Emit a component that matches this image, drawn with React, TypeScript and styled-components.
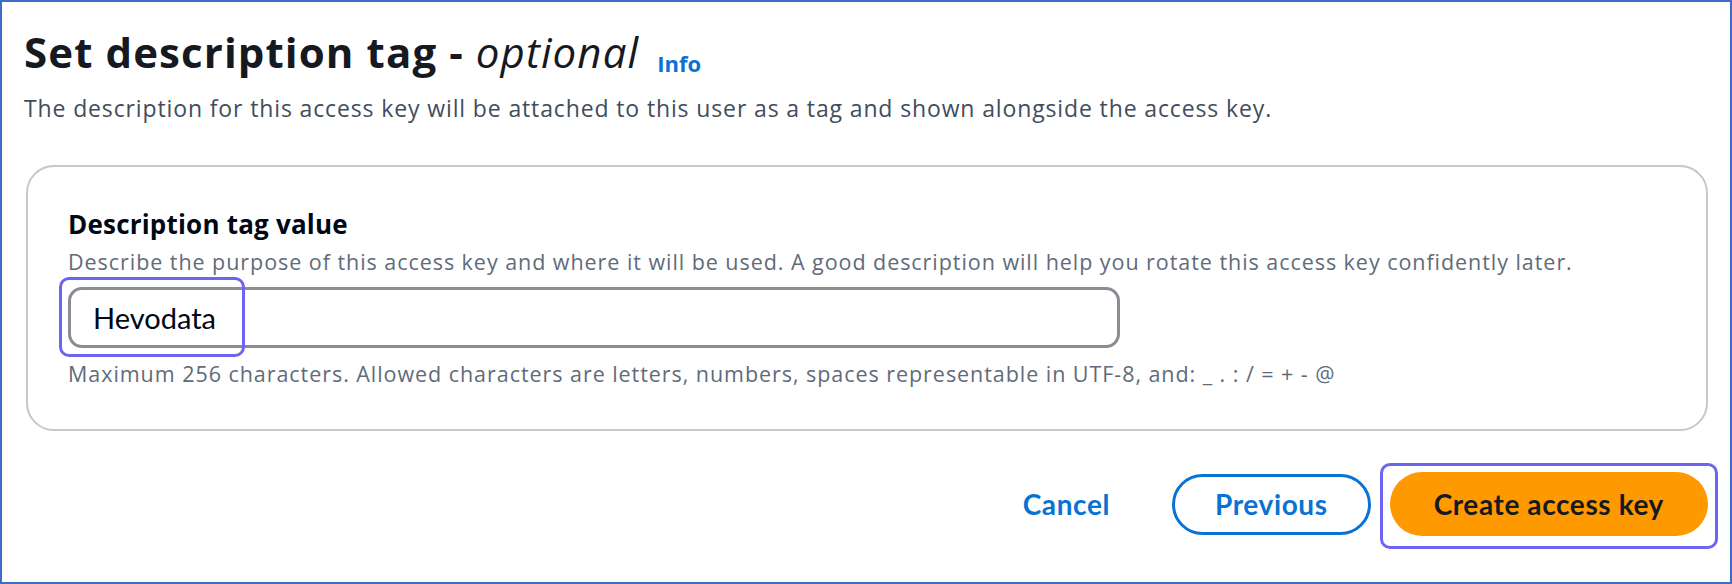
import React from "react";
import styled, { createGlobalStyle } from "styled-components";

const GlobalStyle = createGlobalStyle`
  html, body {
    margin: 0;
    padding: 0;
    background: #ffffff;
  }
  body {
    font-family: "Open Sans", Lato, sans-serif;
    -webkit-font-smoothing: antialiased;
  }
  * { box-sizing: border-box; }
`;

const Frame = styled.div`
  width: 1732px;
  height: 584px;
  border: 2px solid #3a6cc8;
  padding: 26px 22px 0 22px;
  display: flex;
  flex-direction: column;
  background: #ffffff;
`;

const Header = styled.header`
  display: flex;
  flex-direction: column;
`;

const TitleRow = styled.div`
  display: flex;
  align-items: baseline;
  gap: 18px;
`;

const Title = styled.h1`
  margin: 0;
  font-size: 42px;
  line-height: 48px;
  font-weight: 700;
  color: #16191f;
  letter-spacing: 1.1px;
`;

const Optional = styled.i`
  font-weight: 400;
  font-style: italic;
`;

const InfoLink = styled.a`
  font-size: 22px;
  font-weight: 700;
  color: #0972d3;
  text-decoration: none;
  position: relative;
  top: 4px;
`;

const HeaderDescription = styled.p`
  margin: 20px 0 0 0;
  font-size: 23px;
  line-height: 25px;
  letter-spacing: 0.87px;
  color: #414d5c;
`;

const Card = styled.section`
  margin-top: 44px;
  margin-left: 2px;
  border: 2px solid #c6c6cd;
  border-radius: 28px;
  padding: 43px 40px 43px 40px;
  display: flex;
  flex-direction: column;
`;

const Label = styled.label`
  font-size: 26px;
  line-height: 29px;
  font-weight: 700;
  letter-spacing: 0.2px;
  color: #000716;
`;

const Constraint = styled.div<{ $top: number }>`
  margin-top: ${(p) => p.$top}px;
  font-size: 21.5px;
  letter-spacing: 0.95px;
  line-height: 25px;
  color: #5f6b7a;
`;

const InputWrap = styled.div`
  position: relative;
  margin-top: 13px;
  width: 1052px;
`;

const TextInput = styled.div`
  height: 61px;
  border: 3px solid #8c8c94;
  border-radius: 14px;
  padding: 0 0 0 22px;
  display: flex;
  align-items: center;
  font-family: Lato, "Open Sans", sans-serif;
  font-size: 29px;
  color: #000716;
  background: #ffffff;
`;

const Highlight = styled.span<{ $l: number; $t: number; $w: number; $h: number }>`
  position: absolute;
  left: ${(p) => p.$l}px;
  top: ${(p) => p.$t}px;
  width: ${(p) => p.$w}px;
  height: ${(p) => p.$h}px;
  border: 3px solid #6e64f2;
  border-radius: 10px;
  pointer-events: none;
`;

const Actions = styled.div`
  margin-top: 41px;
  display: flex;
  justify-content: flex-end;
  align-items: center;
  gap: 19px;
`;

type Variant = "link" | "normal" | "primary";

const Button = styled.button<{ $variant: Variant }>`
  font-family: Lato, "Open Sans", sans-serif;
  font-size: 28px;
  letter-spacing: 0.6px;
  font-weight: 700;
  height: ${(p) => (p.$variant === "primary" ? 64 : 61)}px;
  padding: 0 ${(p) => (p.$variant === "primary" ? 44 : 40)}px;
  border-radius: 32px;
  border: ${(p) =>
    p.$variant === "normal"
      ? "3px solid #0972d3"
      : p.$variant === "primary"
      ? "none"
      : "3px solid transparent"};
  background: ${(p) => (p.$variant === "primary" ? "#ff9900" : "#ffffff")};
  color: ${(p) => (p.$variant === "primary" ? "#16191f" : "#0972d3")};
  cursor: pointer;
  display: flex;
  align-items: center;
`;

const PrimaryWrap = styled.div`
  position: relative;
  display: flex;
`;

export default function App() {
  return (
    <>
      <GlobalStyle />
      <Frame>
        <Header>
          <TitleRow>
            <Title>
              Set description tag - <Optional>optional</Optional>
            </Title>
            <InfoLink href="#">Info</InfoLink>
          </TitleRow>
          <HeaderDescription>
            The description for this access key will be attached to this user as a tag and shown alongside the access key.
          </HeaderDescription>
        </Header>
        <Card>
          <Label>Description tag value</Label>
          <Constraint $top={10}>
            Describe the purpose of this access key and where it will be used. A good description will help you rotate this access key confidently later.
          </Constraint>
          <InputWrap>
            <TextInput>Hevodata</TextInput>
            <Highlight $l={-9} $t={-10} $w={186} $h={80} />
          </InputWrap>
          <Constraint $top={13}>
            Maximum 256 characters. Allowed characters are letters, numbers, spaces representable in UTF-8, and: _ . : / = + - @
          </Constraint>
        </Card>
        <Actions>
          <Button $variant="link">Cancel</Button>
          <Button $variant="normal">Previous</Button>
          <PrimaryWrap>
            <Button $variant="primary">Create access key</Button>
            <Highlight $l={-10} $t={-9} $w={338} $h={86} />
          </PrimaryWrap>
        </Actions>
      </Frame>
    </>
  );
}
